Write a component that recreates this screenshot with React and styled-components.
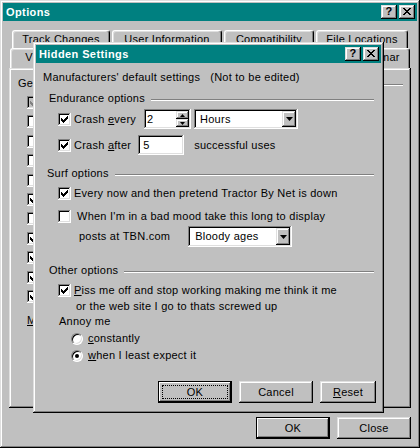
import React from "react";
import styled, { createGlobalStyle, css } from "styled-components";

const GlobalStyle = createGlobalStyle`
  html, body { margin: 0; padding: 0; background: #c0c0c0; }
  body {
    font-family: "Liberation Sans", Arial, sans-serif;
    font-size: 11px;
    letter-spacing: 0.25px;
    color: #000;
  }
  * { box-sizing: border-box; }
`;

const raised = css`
  box-shadow: inset -1px -1px #000, inset 1px 1px #dfdfdf,
    inset -2px -2px #808080, inset 2px 2px #fff;
`;

const sunken = css`
  box-shadow: inset -1px -1px #fff, inset 1px 1px #808080,
    inset -2px -2px #dfdfdf, inset 2px 2px #000;
`;

const Window = styled.div`
  position: relative;
  width: 420px;
  height: 448px;
  padding: 3px;
  background: #c0c0c0;
  display: flex;
  flex-direction: column;
  ${raised}
`;

const TitleBar = styled.div`
  height: 18px;
  flex-shrink: 0;
  background: #008080;
  display: flex;
  align-items: center;
  padding: 0 2px 0 3px;
`;

const Title = styled.span`
  flex: 1;
  color: #fff;
  font-weight: bold;
  font-size: 11px;
  letter-spacing: 0.4px;
`;

const TitleButtons = styled.div`
  display: flex;
  gap: 2px;
`;

const TitleButton = styled.div`
  width: 16px;
  height: 14px;
  background: #c0c0c0;
  display: flex;
  align-items: center;
  justify-content: center;
  font-weight: bold;
  font-size: 11px;
  line-height: 1;
  padding-bottom: 1px;
  ${raised}
`;

const Body = styled.div`
  flex: 1;
  display: flex;
  flex-direction: column;
  padding: 9px 6px 6px 6px;
`;

const TabRow = styled.div`
  display: flex;
  gap: ${(p) => p.$gap || 0}px;
  height: ${(p) => p.$h}px;
  margin: 0 ${(p) => p.$right || 0}px 0 ${(p) => p.$left || 0}px;
`;

const Tab = styled.div`
  ${(p) => (p.$w ? `width: ${p.$w}px;` : "flex: 1;")}
  height: 100%;
  background: #c0c0c0;
  border-top: 1px solid #fff;
  border-left: 1px solid #fff;
  border-right: 1px solid #000;
  border-radius: 3px 3px 0 0;
  box-shadow: inset -1px 0 #808080, inset 1px 1px #dfdfdf;
  text-align: center;
  padding-top: 2px;
  line-height: 13px;
  white-space: nowrap;
  overflow: hidden;
`;

const Panel = styled.div`
  height: 340px;
  background: #c0c0c0;
  padding: 9px 8px 0 9px;
  ${raised}
`;

const GroupHeader = styled.div`
  display: flex;
  align-items: center;
  gap: 6px;
  height: 13px;
  line-height: 13px;
  margin: ${(p) => p.$top || 0}px 0 0 ${(p) => p.$left || 0}px;
  white-space: nowrap;
`;

const Etched = styled.div`
  flex: 1;
  height: 2px;
  margin-top: 2px;
  border-top: 1px solid #808080;
  border-bottom: 1px solid #fff;
`;

const CheckList = styled.div`
  margin: 6px 0 0 9px;
  display: flex;
  flex-direction: column;
`;

const CheckSlot = styled.div`
  height: 19.4px;
`;

const PlainLine = styled.div`
  height: 13px;
  line-height: 13px;
  margin: ${(p) => p.$top || 0}px 0 0 ${(p) => p.$left || 0}px;
  white-space: nowrap;
`;

const ButtonRow = styled.div`
  display: flex;
  justify-content: flex-end;
  gap: 7px;
  margin: ${(p) => p.$top}px ${(p) => p.$right || 0}px 0 0;
`;

const Button = styled.div`
  position: relative;
  width: ${(p) => p.$w}px;
  height: 22px;
  background: #c0c0c0;
  display: flex;
  align-items: center;
  justify-content: center;
  ${(p) =>
    p.$default
      ? css`
          border: 1px solid #000;
          box-shadow: inset -1px -1px #000, inset 1px 1px #fff,
            inset -2px -2px #808080;
        `
      : raised}
`;

const FocusRing = styled.span`
  position: absolute;
  inset: 3px;
  border: 1px dotted #000;
`;

const Dialog = styled.div`
  position: absolute;
  left: 33px;
  top: 42px;
  width: 351px;
  height: 371px;
  padding: 3px;
  background: #c0c0c0;
  display: flex;
  flex-direction: column;
  ${raised}
`;

const DialogBody = styled.div`
  flex: 1;
  display: flex;
  flex-direction: column;
  padding: 8px 7px 0 7px;
`;

const Row = styled.div`
  display: flex;
  align-items: center;
  height: ${(p) => p.$h || 13}px;
  margin: ${(p) => p.$top || 0}px 0 0 ${(p) => p.$left || 0}px;
  white-space: nowrap;
`;

const Label = styled.span`
  margin-left: ${(p) => p.$gap ?? 3}px;
  line-height: 13px;
`;

const Box = styled.div`
  width: 13px;
  height: 13px;
  flex-shrink: 0;
  background: ${(p) => (p.$disabled ? "#c0c0c0" : "#fff")};
  display: flex;
  align-items: center;
  justify-content: center;
  ${sunken}
`;

const CHECK = [
  [6, 0], [5, 1], [6, 1], [0, 2], [4, 2], [5, 2], [6, 2],
  [0, 3], [1, 3], [3, 3], [4, 3], [5, 3], [0, 4], [1, 4], [2, 4],
  [3, 4], [4, 4], [1, 5], [2, 5], [3, 5], [2, 6],
];

const Check = ({ checked, disabled }) => (
  <Box $disabled={disabled}>
    {checked && (
      <svg width="7" height="7" viewBox="0 0 7 7" shapeRendering="crispEdges">
        {CHECK.map(([x, y]) => (
          <rect key={`${x}-${y}`} x={x} y={y} width="1" height="1"
            fill={disabled ? "#808080" : "#000"} />
        ))}
      </svg>
    )}
  </Box>
);

const RadioBox = styled.div`
  width: 12px;
  height: 12px;
  flex-shrink: 0;
  border-radius: 50%;
  background: #fff;
  border: 1px solid;
  border-color: #808080 #fff #fff #808080;
  box-shadow: inset 1px 1px #000, inset -1px -1px #dfdfdf;
  display: flex;
  align-items: center;
  justify-content: center;
`;

const Dot = styled.div`
  width: 4px;
  height: 4px;
  border-radius: 50%;
  background: #000;
`;

const Field = styled.div`
  width: ${(p) => p.$w}px;
  height: ${(p) => p.$h || 20}px;
  margin-left: ${(p) => p.$gap || 0}px;
  background: #fff;
  display: flex;
  align-items: center;
  padding: 2px 2px 2px ${(p) => p.$pad || 4}px;
  ${sunken}
`;

const FieldText = styled.span`
  flex: 1;
  line-height: 13px;
`;

const SpinStack = styled.div`
  display: flex;
  flex-direction: column;
  width: 13px;
  height: 100%;
`;

const SpinBtn = styled.div`
  flex: 1;
  background: #c0c0c0;
  display: flex;
  align-items: center;
  justify-content: center;
  ${raised}
`;

const DropBtn = styled.div`
  width: 14px;
  height: 100%;
  background: #c0c0c0;
  display: flex;
  align-items: center;
  justify-content: center;
  ${raised}
`;

const Arrow = ({ up, w = 5 }) => {
  const h = Math.ceil(w / 2);
  const pts = up ? `0,${h} ${w},${h} ${w / 2},0` : `0,0 ${w},0 ${w / 2},${h}`;
  return (
    <svg width={w} height={h} viewBox={`0 0 ${w} ${h}`}>
      <polygon points={pts} fill="#000" />
    </svg>
  );
};

const Combo = ({ value, w, gap, pad, h }) => (
  <Field $w={w} $gap={gap} $pad={pad} $h={h}>
    <FieldText>{value}</FieldText>
    <DropBtn>
      <Arrow w={7} />
    </DropBtn>
  </Field>
);

const CloseGlyph = () => (
  <svg width="8" height="7" viewBox="0 0 8 7" shapeRendering="crispEdges">
    <path d="M0 0h2v1h-2zM6 0h2v1h-2zM1 1h2v1h-2zM5 1h2v1h-2zM2 2h4v1h-4zM3 3h2v1h-2zM2 4h4v1h-4zM1 5h2v1h-2zM5 5h2v1h-2zM0 6h2v1h-2zM6 6h2v1h-2z" fill="#000" />
  </svg>
);

const TitleControls = () => (
  <TitleButtons>
    <TitleButton>?</TitleButton>
    <TitleButton>
      <CloseGlyph />
    </TitleButton>
  </TitleButtons>
);

const generalChecks = [
  { checked: true, disabled: true },
  {}, {}, {}, {},
  { checked: true },
  {},
  { checked: true }, { checked: true }, { checked: true }, { checked: true },
];

const HiddenSettings = () => (
  <Dialog>
    <TitleBar>
      <Title>Hidden Settings</Title>
      <TitleControls />
    </TitleBar>
    <DialogBody>
      <PlainLine>
        Manufacturers' default settings<Label $gap={10}>(Not to be edited)</Label>
      </PlainLine>

      <GroupHeader $top={8} $left={6}>
        Endurance options <Etched />
      </GroupHeader>
      <Row $h={20} $top={4} $left={15}>
        <Check checked />
        <Label>Crash <u>e</u>very</Label>
        <Field $w={47} $gap={8} $pad={3}>
          <FieldText>2</FieldText>
          <SpinStack>
            <SpinBtn><Arrow up /></SpinBtn>
            <SpinBtn><Arrow /></SpinBtn>
          </SpinStack>
        </Field>
        <Combo value="Hours" w={104} gap={3} pad={6} />
      </Row>
      <Row $h={20} $top={6} $left={15}>
        <Check checked />
        <Label>Crash <u>a</u>fter</Label>
        <Field $w={46} $gap={7} $pad={5}>
          <FieldText>5</FieldText>
        </Field>
        <Label $gap={10}>successful uses</Label>
      </Row>

      <GroupHeader $top={12} $left={4}>
        Surf options <Etched />
      </GroupHeader>
      <Row $top={7} $left={15}>
        <Check checked />
        <Label>Every now and then pretend Tractor By Net is down</Label>
      </Row>
      <Row $top={10} $left={15}>
        <Check />
        <Label $gap={6}>When I'm in a bad mood take this long to display</Label>
      </Row>
      <Row $h={21} $top={3} $left={36}>
        <Label $gap={0}>posts at TBN.com</Label>
        <Combo value="Bloody ages" w={104} gap={18} pad={7} h={21} />
      </Row>

      <GroupHeader $top={17} $left={6}>
        Other options <Etched />
      </GroupHeader>
      <Row $top={7} $left={15}>
        <Check checked />
        <Label><u>P</u>iss me off and stop working making me think it me</Label>
      </Row>
      <PlainLine $top={3} $left={33}>or the web site I go to thats screwed up</PlainLine>
      <PlainLine $top={2} $left={16}>Annoy me</PlainLine>
      <Row $top={4} $left={28}>
        <RadioBox />
        <Label $gap={5}><u>c</u>onstantly</Label>
      </Row>
      <Row $top={4} $left={28}>
        <RadioBox><Dot /></RadioBox>
        <Label $gap={5}><u>w</u>hen I least expect it</Label>
      </Row>

      <ButtonRow $top={19} $right={-2}>
        <Button $w={74} $default>
          <FocusRing />
          OK
        </Button>
        <Button $w={74}>Cancel</Button>
        <Button $w={56}><span><u>R</u>eset</span></Button>
      </ButtonRow>
    </DialogBody>
  </Dialog>
);

const App = () => (
  <>
    <GlobalStyle />
    <Window>
      <TitleBar>
        <Title>Options</Title>
        <TitleControls />
      </TitleBar>
      <Body>
        <TabRow $h={18} $left={3} $gap={2}>
          <Tab $w={98}>Track Changes</Tab>
          <Tab $w={110}>User Information</Tab>
          <Tab $w={90}>Compatibility</Tab>
          <Tab $w={92}>File Locations</Tab>
        </TabRow>
        <TabRow $h={20} $left={1} $right={1}>
          <Tab>View</Tab>
          <Tab>General</Tab>
          <Tab>Edit</Tab>
          <Tab>Print</Tab>
          <Tab>Save</Tab>
          <Tab $w={124}>Spelling &amp; Grammar</Tab>
        </TabRow>
        <Panel>
          <GroupHeader>
            General options <Etched />
          </GroupHeader>
          <CheckList>
            {generalChecks.map((c, i) => (
              <CheckSlot key={i}>
                <Check checked={c.checked} disabled={c.disabled} />
              </CheckSlot>
            ))}
          </CheckList>
          <PlainLine $top={5} $left={9}>
            <u>M</u>easurement units:
          </PlainLine>
        </Panel>
        <ButtonRow $top={9}>
          <Button $w={74} $default>OK</Button>
          <Button $w={74}>Close</Button>
        </ButtonRow>
      </Body>
      <HiddenSettings />
    </Window>
  </>
);

export default App;
